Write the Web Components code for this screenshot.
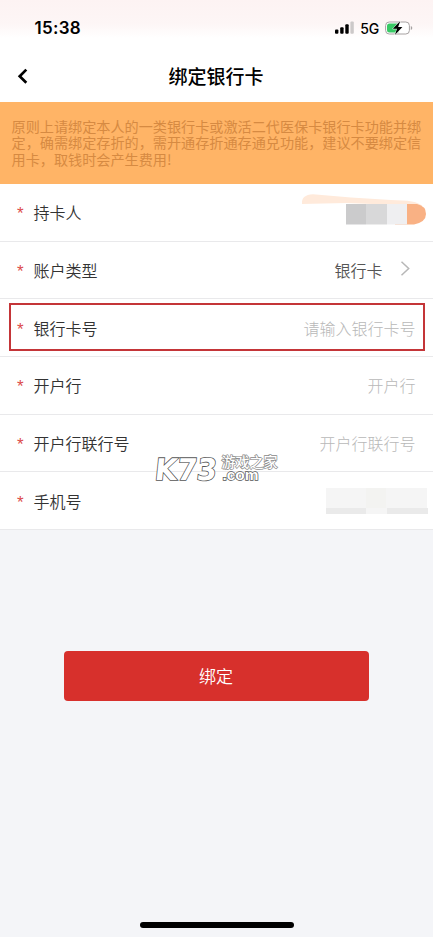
<!DOCTYPE html>
<html lang="zh-CN">
<head>
<meta charset="utf-8">
<title>绑定银行卡</title>
<style>
html, body { margin: 0; height: 100%; overflow: hidden; }
body { font-family: "Noto Sans CJK SC", "Noto Sans", sans-serif; background: #f4f5f8; }
</style>
</head>
<body>
<bind-card-page></bind-card-page>
<script>
function define(name, html) {
  customElements.define(name, class extends HTMLElement {
    constructor() {
      super();
      const t = document.createElement('template');
      t.innerHTML = html;
      this.attachShadow({ mode: 'open' }).appendChild(t.content.cloneNode(true));
    }
  });
}

define('status-bar', `
<style>
:host { display: flex; justify-content: space-between; align-items: flex-start; height: 50px; box-sizing: border-box; padding: 17px 20px 0 34.5px; font-family: Inter, sans-serif; color: #000; }
.time { font-size: 17px; line-height: 22px; font-weight: 600; letter-spacing: .3px; }
.right { display: flex; align-items: center; height: 21px; }
.net { font-size: 14px; line-height: 21px; font-weight: 500; margin: 1px 6px 0 6px; letter-spacing: -.2px; }
svg { display: block; }
</style>
<span class="time">15:38</span>
<div class="right">
  <svg width="19" height="13" viewBox="0 0 19 13"><rect x="0" y="8.4" width="3.4" height="4.3" rx="1"/><rect x="5.2" y="6.2" width="3.4" height="6.5" rx="1"/><rect x="10.3" y="3.2" width="3.4" height="9.5" rx="1"/><rect x="15.4" y=".4" width="3.4" height="12.3" rx="1" fill="#ccc9c9"/></svg>
  <span class="net">5G</span>
  <svg width="28" height="16" viewBox="0 0 28 16"><rect x=".6" y="2" width="23.8" height="12" rx="3.6" fill="#fff" stroke="#a6a2a2"/><path d="M4.5 3.5H13.5V12.5H4.5Q2 12.5 2 10V6Q2 3.5 4.5 3.5Z" fill="#38c965"/><path d="M25.8 6v4q1.5-.4 1.5-2t-1.5-2Z" fill="#a6a2a2"/><path d="M15.3 1 7.8 8.8h4.2L9.9 15.1l7.5-8h-4.3Z" stroke="#fff" stroke-width="1" paint-order="stroke"/></svg>
</div>`);

define('nav-bar', `
<style>
:host { display: grid; grid-template-columns: 60px 1fr 60px; align-items: center; height: 52px; color: #000; }
svg { display: block; margin-left: 17px; }
h1 { margin: 0 1px 0 0; text-align: center; font-size: 19px; line-height: 28px; font-weight: 500; }
</style>
<svg width="12" height="18" viewBox="0 0 12 18"><path d="M9.3 2.6 2.7 9.3l6.6 6.5" fill="none" stroke="#000" stroke-width="2.7"/></svg>
<h1><slot></slot></h1>`);

define('notice-banner', `
<style>
:host { display: block; box-sizing: border-box; height: 82px; padding: 15.8px 8px 0 11.5px; background: #ffb466; color: #d68a42; font-size: 14.13px; line-height: 16.5px; white-space: nowrap; }
</style><slot></slot>`);

define('form-row', `
<style>
:host { display: flex; align-items: center; box-sizing: border-box; height: 57.65px; padding: 0 17.5px 0 16.5px; border-bottom: 1px solid #e9e9eb; background: #fff; font-size: 16px; line-height: 24px; color: #333; position: relative; }
:host([active])::after { content: ""; position: absolute; left: 9px; right: 8px; top: 4px; height: 44px; border: 2px solid #c43538; }
.star { width: 17px; color: #dc4b4b; font-family: "Liberation Sans", sans-serif; font-size: 17px; text-indent: .5px; padding-top: 4px; }
.label { font-weight: 350; }
.value { margin-left: auto; color: #b8b8b8; font-weight: 300; display: flex; align-items: center; }
:host([filled]) .value { color: #555; font-weight: 350; }
</style>
<span class="star">*</span><span class="label"><slot name="label"></slot></span><span class="value"><slot></slot></span>`);

define('chevron-right', `
<style>:host { display: block; margin: -3px 5px 0 17px; } svg { display: block; }</style>
<svg width="11" height="17" viewBox="0 0 11 17"><path d="m1.5 1.8 7.2 6.7-7.2 6.7" fill="none" stroke="#b7b7b7" stroke-width="1.5"/></svg>`);

define('name-mask', `
<style>:host { display: block; margin: -8px -11px 0 0; } svg { display: block; }</style>
<svg width="126" height="33" viewBox="0 0 126 33">
<path d="M1 12Q0 3 12 2.3L50 5.5 90 8Q116 8 121 14L98 13 45 11Z" fill="#ffeadb"/>
<path d="M94 12H116Q125 14 125 22T113 32.5H94Z" fill="#f9b184"/>
<path d="M45 12H65V32.5H45Z" fill="#cbcbcc"/><path d="M65 12H86V32.5H65Z" fill="#d8d8d9"/><path d="M86 12H106V32.5H86Z" fill="#efeff1"/></svg>`);

define('phone-mask', `
<style>:host { display: block; margin: 1px -12px 0 0; } svg { display: block; }</style>
<svg width="102" height="28" viewBox="0 0 102 28"><path d="M0 1H101V27H0Z" fill="#f5f5f5"/><path d="M40 1H60V21H40Z" fill="#f3f3f1"/><path d="M0 21H40V27H0ZM61 21H102V27H61Z" fill="#eaeaea"/></svg>`);

define('primary-button', `
<style>
:host { display: block; }
button { display: block; width: 100%; height: 50px; padding: 0 1px 0 0; border: 0; border-radius: 4px; background: #d7302c; color: #fff; font: 350 17px/26px "Noto Sans CJK SC", sans-serif; }
</style><button><slot></slot></button>`);

define('site-mark', `
<style>
:host { display: block; position: absolute; left: 152px; top: 452px; }
svg { display: block; overflow: visible; }
text { fill: #fff; stroke-linejoin: miter; paint-order: stroke; }
</style>
<svg width="128" height="32" viewBox="0 0 128 32">
<text transform="translate(2 27.5) skewX(-6)" font-family="DejaVu Sans, sans-serif" font-weight="700" font-size="30" textLength="62" lengthAdjust="spacingAndGlyphs" stroke="#555" stroke-width="1.6">K73</text>
<text x="69.5" y="14.5" font-family="Noto Sans CJK SC, sans-serif" font-weight="500" font-size="14" stroke="#888" stroke-width="1.3">游戏之家</text>
<text x="70.5" y="27.8" font-family="Liberation Sans, sans-serif" font-weight="700" font-size="15" stroke="#555" stroke-width="1.4" textLength="36" lengthAdjust="spacingAndGlyphs">.com</text>
</svg>`);

define('bind-card-page', `
<style>
:host { display: flex; flex-direction: column; position: relative; width: 433px; height: 937px; background: #f4f5f8; overflow: hidden; }
header { height: 102px; background: linear-gradient(#fdf3f3 0, #fdf6f6 24px, #fff 38px); }
.form { display: flex; flex-direction: column; }
primary-button { margin: 121px 64px 0; }
.home { width: 154px; height: 5.6px; border-radius: 3px; background: #000; margin: auto auto 9px; }
</style>
<header><status-bar></status-bar><nav-bar>绑定银行卡</nav-bar></header>
<notice-banner>原则上请绑定本人的一类银行卡或激活二代医保卡银行卡功能并绑<br>定，确需绑定存折的，需开通存折通存通兑功能，建议不要绑定信<br>用卡，取钱时会产生费用!</notice-banner>
<div class="form">
<form-row><span slot="label">持卡人</span><name-mask></name-mask></form-row>
<form-row filled><span slot="label">账户类型</span>银行卡<chevron-right></chevron-right></form-row>
<form-row active><span slot="label">银行卡号</span>请输入银行卡号</form-row>
<form-row><span slot="label">开户行</span>开户行</form-row>
<form-row><span slot="label">开户行联行号</span>开户行联行号</form-row>
<form-row><span slot="label">手机号</span><phone-mask></phone-mask></form-row>
</div>
<primary-button>绑定</primary-button>
<div class="home"></div>
<site-mark></site-mark>`);
</script>
</body>
</html>
